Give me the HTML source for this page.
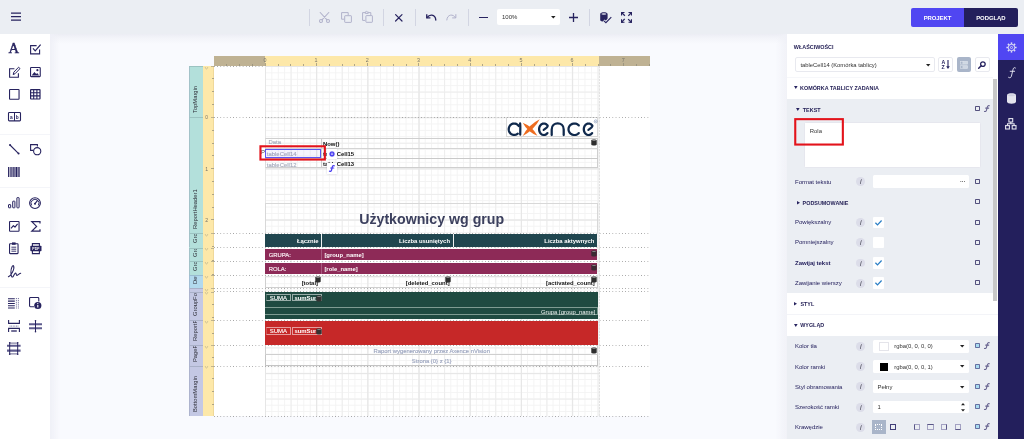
<!DOCTYPE html>
<html><head><meta charset="utf-8"><title>Report Designer</title><style>
*{box-sizing:border-box;margin:0;padding:0}
html,body{width:1024px;height:439px;overflow:hidden}
body{background:#f9fafe;font-family:"Liberation Sans",sans-serif;position:relative;color:#27235f}
.abs{position:absolute}
#topbar{left:0;top:0;width:1024px;height:34px;background:#ebeef3}
#topshadow{left:50px;top:34px;width:737px;height:10px;background:linear-gradient(#ecedf4,#f3f4f9 40%,#f9fafe)}
#leftshadow{left:50px;top:34px;width:10px;height:405px;background:linear-gradient(90deg,#eff0f7,rgba(249,250,254,0))}
#toolbox{left:0;top:34px;width:50px;height:405px;background:#fff}
#rpanel{left:787px;top:34px;width:211px;height:405px;background:#fff}
#rshadow{left:776px;top:34px;width:11px;height:405px;background:linear-gradient(90deg,rgba(249,250,254,0),#f0f1f7)}
#tabs{left:998px;top:34px;width:26px;height:405px;background:#231f5c}
.sep{position:absolute;top:9px;width:1px;height:17px;background:#d2d5e2}
.tsep{position:absolute;left:0;width:50px;height:1px;background:#f4f5f9}
svg{position:absolute;overflow:visible}
</style></head><body>
<div id="app" class="abs" style="left:0;top:0;width:1024px;height:439px;will-change:transform">
<div id="topbar" class="abs"></div>
<div id="topshadow" class="abs"></div><div id="leftshadow" class="abs"></div><div id="rshadow" class="abs"></div>
<div id="toolbox" class="abs"></div>
<div id="rpanel" class="abs"></div>
<div id="tabs" class="abs"></div>
<div class="abs" style="left:0;top:0;width:1024px;height:34px">
<svg style="left:11px;top:12px" width="10" height="9" viewBox="0 0 10 9"><path d="M0 1h10M0 4.5h10M0 8h10" stroke="#27235f" stroke-width="1.25"/></svg>
<div class="sep" style="left:309.4px"></div>
<div class="sep" style="left:383.4px"></div>
<div class="sep" style="left:414.7px"></div>
<div class="sep" style="left:467.6px"></div>
<div class="sep" style="left:589px"></div>
<svg style="left:319.4px;top:12px" width="11" height="11" viewBox="0 0 11 11" fill="none" stroke="#b1b2cb" stroke-width="1.05" stroke-linecap="round"><circle cx="2" cy="9" r="1.5"/><circle cx="9" cy="9" r="1.5"/><path d="M3 7.8 L9.8 0.5M8 7.8 L1.2 0.5"/></svg>
<svg style="left:341px;top:12px" width="11" height="11" viewBox="0 0 11 11" fill="none" stroke="#b1b2cb" stroke-width="1" stroke-linejoin="round"><path d="M3.2 7.2H0.6V0.6H7.2V3.2"/><rect x="3.7" y="3.7" width="6.7" height="6.7" rx="0.5"/></svg>
<svg style="left:362px;top:11.4px" width="11" height="12" viewBox="0 0 11 12" fill="none" stroke="#b1b2cb" stroke-width="1" stroke-linejoin="round"><path d="M3.2 9.4H0.6V1.6H3.3M6.2 1.6H8.8V4"/><path d="M3.3 2.4V0.9H4.1L4.7 0.3L5.4 0.9H6.2V2.4Z" /><rect x="3.9" y="4.6" width="6.5" height="6.7" rx="0.5"/></svg>
<svg style="left:395.4px;top:14px" width="7.6" height="7.6" viewBox="0 0 7.6 7.6" fill="none" stroke="#27235f" stroke-width="1.2" stroke-linecap="round"><path d="M0.6 0.6L7 7M7 0.6L0.6 7"/></svg>
<svg style="left:425.6px;top:14.2px" width="10.6" height="6.6" viewBox="0 0 10.6 6.6"><g  fill="none" stroke="#27235f" stroke-width="1.35" stroke-linejoin="miter"><path d="M0.75 0.2V3.9H4.4"/><path d="M1.2 3.5C2.4 1.7 4.2 0.9 5.9 1.1C8.2 1.4 9.6 3.4 9.8 6" stroke-linecap="round"/></g></svg>
<svg style="left:446.4px;top:14.2px" width="10.6" height="6.6" viewBox="0 0 10.6 6.6"><g transform="translate(10.6 0) scale(-1 1)" fill="none" stroke="#b1b2cb" stroke-width="1" stroke-linejoin="miter"><path d="M0.75 0.2V3.9H4.4"/><path d="M1.2 3.5C2.4 1.7 4.2 0.9 5.9 1.1C8.2 1.4 9.6 3.4 9.8 6" stroke-linecap="round"/></g></svg>
<div class="abs" style="left:479px;top:16.8px;width:9px;height:1.4px;background:#27235f"></div>
<div class="abs" style="left:497px;top:9px;width:63px;height:16.2px;background:#fff;border-radius:2px"></div>
<div class="abs" style="left:502px;top:13.6px;font-size:6px;line-height:7px;color:#333">100%</div>
<svg style="left:551.2px;top:15.8px" width="4.6" height="2.6" viewBox="0 0 4.6 2.6"><path d="M0 0H4.6L2.3 2.6Z" fill="#222"/></svg>
<svg style="left:569px;top:13.4px" width="9" height="9" viewBox="0 0 9 9"><path d="M0 4.5H9M4.5 0V9" stroke="#27235f" stroke-width="1.3"/></svg>
<svg style="left:599.6px;top:11.6px" width="12" height="11.4" viewBox="0 0 12 11.4"><path d="M0.2 2C0.2 -0.3 7.6 -0.3 7.6 2V8C7.6 10.3 0.2 10.3 0.2 8Z" fill="#27235f"/><ellipse cx="3.9" cy="1.9" rx="2.5" ry="0.75" fill="#e4e6f0"/><path d="M3.6 8.6L5.8 10.6L11.4 5" fill="none" stroke="#ebeef3" stroke-width="2.8"/><path d="M3.9 8.9L5.9 10.7L11.3 5.1" fill="none" stroke="#27235f" stroke-width="1.1"/></svg>
<svg style="left:621px;top:12px" width="11" height="10.8" viewBox="0 0 11 10.8" fill="none" stroke="#27235f"><g transform="translate(0 0) rotate(0)"><path d="M0.55 3.5V0.55H3.5" stroke-width="1.1"/><path d="M0.8 0.8L3.9 3.7" stroke-width="1.25"/><path d="M0 0H2.4L0 2.4Z" fill="#27235f" stroke="none"/></g><g transform="translate(11 0) rotate(90)"><path d="M0.55 3.5V0.55H3.5" stroke-width="1.1"/><path d="M0.8 0.8L3.9 3.7" stroke-width="1.25"/><path d="M0 0H2.4L0 2.4Z" fill="#27235f" stroke="none"/></g><g transform="translate(11 10.8) rotate(180)"><path d="M0.55 3.5V0.55H3.5" stroke-width="1.1"/><path d="M0.8 0.8L3.9 3.7" stroke-width="1.25"/><path d="M0 0H2.4L0 2.4Z" fill="#27235f" stroke="none"/></g><g transform="translate(0 10.8) rotate(270)"><path d="M0.55 3.5V0.55H3.5" stroke-width="1.1"/><path d="M0.8 0.8L3.9 3.7" stroke-width="1.25"/><path d="M0 0H2.4L0 2.4Z" fill="#27235f" stroke="none"/></g></svg>
<div class="abs" style="left:910.8px;top:8.2px;width:53.4px;height:18.6px;background:#5046f2;border-radius:2px 0 0 2px"></div>
<div class="abs" style="left:964.2px;top:8.2px;width:53.4px;height:18.6px;background:#231f5c;border-radius:0 2px 2px 0"></div>
<div class="abs" style="left:910.8px;top:13.6px;font-size:5.95px;font-weight:bold;color:#fff;line-height:8px;text-align:center;width:53.4px;letter-spacing:-0.05px">PROJEKT</div>
<div class="abs" style="left:964.2px;top:13.6px;font-size:5.95px;font-weight:bold;color:#fff;line-height:8px;text-align:center;width:53.4px;letter-spacing:-0.05px">PODGLĄD</div>
</div><div class="abs" style="left:0;top:0;width:50px;height:439px">
<div class="tsep" style="top:133.6px"></div>
<div class="tsep" style="top:187.4px"></div>
<div class="tsep" style="top:287.4px"></div>
<div class="abs" style="left:8.5px;top:41.4px;font-family:'Liberation Serif',serif;font-size:14.6px;line-height:14px;color:#27235f;-webkit-text-stroke:0.45px #27235f">A</div>
<svg style="left:30px;top:43.6px" width="11" height="10.6" viewBox="0 0 11 10.6" fill="none" stroke="#27235f" stroke-width="1" ><path d="M9.6 5.4V9.9H0.6V1.6H6.6" stroke-width="1.1"/><path d="M3 4.4L5.2 6.8L10.6 0.6" stroke-width="1.2"/></svg>
<svg style="left:8.8px;top:65.6px" width="11.4" height="12" viewBox="0 0 11.4 12" fill="none" stroke="#27235f" stroke-width="1" ><path d="M9.4 7.2V11.2H0.6V2.8H5.4" stroke-width="1.1"/><path d="M4.2 8.6L4.8 6.2L9.6 1.2L11 2.6L6.2 7.6Z" stroke-width="1" stroke-linejoin="round"/></svg>
<svg style="left:30px;top:66.8px" width="10.8" height="10.2" viewBox="0 0 10.8 10.2" fill="none" stroke="#27235f" stroke-width="1" ><rect x="0.55" y="0.55" width="9.7" height="9.1" rx="0.6" stroke-width="1.1"/><path d="M1.6 8.6L4.4 5L6.2 7L7.2 6L9.2 8.6Z" fill="#27235f" stroke="none"/><circle cx="7.4" cy="3.2" r="1.1" fill="#27235f" stroke="none"/></svg>
<svg style="left:8.7px;top:89px" width="10.6" height="10.8" viewBox="0 0 10.6 10.8" fill="none" stroke="#27235f" stroke-width="1" ><rect x="0.55" y="0.55" width="9.5" height="9.7" rx="0.5" stroke-width="1.1"/></svg>
<svg style="left:30px;top:89.2px" width="10.6" height="10.6" viewBox="0 0 10.6 10.6" fill="none" stroke="#27235f" stroke-width="1" ><rect x="0.6" y="0.6" width="9.4" height="9.4" rx="0.4" stroke-width="1.2"/><path d="M3.7 0.6V10M6.9 0.6V10M0.6 3.7H10M0.6 6.9H10" stroke-width="1.1"/></svg>
<svg style="left:7.6px;top:112.4px" width="13" height="9.4" viewBox="0 0 13 9.4" fill="none" stroke="#27235f" stroke-width="1" ><rect x="0.5" y="0.5" width="12" height="8.4" rx="0.8" stroke-width="1.1"/><path d="M6.5 0.5V8.9" stroke-width="1"/><text x="2" y="6.6" font-size="4.8" font-weight="bold" fill="#27235f" stroke="none" font-family="Liberation Sans">a</text><text x="7.8" y="6.6" font-size="4.8" font-weight="bold" fill="#27235f" stroke="none" font-family="Liberation Sans">b</text></svg>
<svg style="left:8.8px;top:143.8px" width="10.6" height="10.6" viewBox="0 0 10.6 10.6" fill="none" stroke="#27235f" stroke-width="1" ><path d="M1 1L9.6 9.6" stroke-width="1.1"/><circle cx="1" cy="1" r="1" fill="#27235f" stroke="none"/><circle cx="9.6" cy="9.6" r="1" fill="#27235f" stroke="none"/></svg>
<svg style="left:30px;top:143.8px" width="11.4" height="11.4" viewBox="0 0 11.4 11.4" fill="none" stroke="#27235f" stroke-width="1" ><path d="M3.4 6.4H0.6V0.6H7.4V2.6" stroke-width="1.1"/><circle cx="7.2" cy="7.2" r="3.6" stroke-width="1.1" fill="#fff"/></svg>
<svg style="left:8.2px;top:167px" width="12" height="10" viewBox="0 0 12 10" fill="none" stroke="#27235f" stroke-width="1" ><path d="M0.7 0V10M3 0V10M5.9 0V10M8.4 0V10M11 0V10" stroke-width="1.3"/><path d="M4.4 0V10M7.2 0V10M9.7 0V10" stroke-width="0.6"/></svg>
<svg style="left:8px;top:197.4px" width="11.6" height="11.4" viewBox="0 0 11.6 11.4" fill="none" stroke="#27235f" stroke-width="1" ><rect x="0.5" y="7.6" width="2.2" height="3.2" rx="0.4"/><rect x="4.7" y="4.2" width="2.2" height="6.6" rx="0.4"/><rect x="8.9" y="0.6" width="2.2" height="10.2" rx="0.4"/></svg>
<svg style="left:29.3px;top:197px" width="12" height="12.2" viewBox="0 0 12 12.2" fill="none" stroke="#27235f" stroke-width="1" ><circle cx="6" cy="6.1" r="5.4" stroke-width="1.1"/><path d="M2.6 8.4A4 4 0 1 1 9.4 8.4" stroke-width="1"/><path d="M6 6.6L8.4 3.6" stroke-width="1.1" stroke-linecap="round"/><circle cx="6" cy="6.8" r="1" fill="#27235f" stroke="none"/></svg>
<svg style="left:8.8px;top:221.2px" width="10.6" height="10.8" viewBox="0 0 10.6 10.8" fill="none" stroke="#27235f" stroke-width="1" ><rect x="0.55" y="0.55" width="9.5" height="9.7" rx="0.5" stroke-width="1.1"/><path d="M2 7.4L4.4 4.6L6 6.2L8.6 2.8" stroke-width="1.1" stroke-linejoin="round"/></svg>
<svg style="left:30.6px;top:221.2px" width="9.4" height="10.8" viewBox="0 0 9.4 10.8" fill="none" stroke="#27235f" stroke-width="1" ><path d="M9 2.6V0.6H0.8L5.6 5.4L0.8 10.2H9V8.2" stroke-width="1.2" stroke-linejoin="miter"/></svg>
<svg style="left:9.2px;top:242.4px" width="9.6" height="12.2" viewBox="0 0 9.6 12.2" fill="none" stroke="#27235f" stroke-width="1" ><rect x="0.55" y="1.8" width="8.5" height="9.8" rx="0.6" stroke-width="1.1"/><rect x="3" y="0.4" width="3.6" height="2.4" fill="#27235f" stroke="none"/><path d="M2.4 5.2H7.2M2.4 7.2H7.2M2.4 9.2H7.2" stroke-width="0.9"/></svg>
<svg style="left:29.5px;top:243px" width="11.8" height="11.2" viewBox="0 0 11.8 11.2" fill="none" stroke="#27235f" stroke-width="1" ><path d="M2.4 3V0.6H9.4V3" stroke-width="1.1"/><rect x="0.3" y="2.8" width="11.2" height="5.4" rx="0.8" fill="#27235f" stroke="none"/><path d="M2.4 8V10.6H9.4V8" stroke-width="1.1"/><text x="5.9" y="7" font-size="3.6" font-weight="bold" fill="#fff" stroke="none" text-anchor="middle" font-family="Liberation Sans">PDF</text></svg>
<svg style="left:7.5px;top:264.8px" width="13" height="13.2" viewBox="0 0 13 13.2" fill="none" stroke="#27235f" stroke-width="1" ><path d="M0.4 11.8C3 10.6 6.8 4.2 5.7 1.2C4.9 -0.8 2.7 3 2.9 7.6C3.1 11.8 4.1 12.8 5.1 11.6C6.1 10.4 6.7 7.8 7.7 8C8.5 8.2 7.9 10.4 8.9 10.4C9.9 10.4 10.7 8.6 12.7 8.2" stroke-width="1.05" stroke-linecap="round" stroke-linejoin="round"/></svg>
<svg style="left:8.4px;top:298px" width="11" height="11" viewBox="0 0 11 11" fill="none" stroke="#27235f" stroke-width="1" ><path d="M0 0.8H6.8M0 3.1H6.8M0 5.4H6.8M0 7.7H6.8M0 10H6.8" stroke-width="1.05"/><path d="M8.4 0V10.6M10.4 0V10.6" stroke-width="0.9" stroke="#5f5c8e" stroke-dasharray="1 0.9"/></svg>
<svg style="left:29.2px;top:297.2px" width="12.6" height="12.2" viewBox="0 0 12.6 12.2" fill="none" stroke="#27235f" stroke-width="1" ><path d="M5 9.7H1.4Q0.55 9.7 0.55 8.8V1.4Q0.55 0.55 1.4 0.55H8.9Q9.8 0.55 9.8 1.4V4.6" stroke-width="1.1"/><circle cx="8.8" cy="8.5" r="3.6" fill="#27235f" stroke="none"/><path d="M8.8 8V10.4" stroke="#fff" stroke-width="1.1"/><circle cx="8.8" cy="6.6" r="0.65" fill="#fff" stroke="none"/></svg>
<svg style="left:8px;top:320.2px" width="12" height="12" viewBox="0 0 12 12" fill="none" stroke="#27235f" stroke-width="1" ><path d="M0.6 0V3.4H11.4V0" stroke-width="1.1"/><path d="M1.6 6.1H10.4" stroke-width="0.9" stroke="#5f5c8e" stroke-dasharray="0.9 0.7"/><path d="M0.6 12V8.4H11.4V12" stroke-width="1.1"/><path d="M3.2 11H8.8" stroke-width="1.3"/></svg>
<svg style="left:28.8px;top:320px" width="13" height="12.6" viewBox="0 0 13 12.6" fill="none" stroke="#27235f" stroke-width="1" ><path d="M0 4.3H13M0 8.2H13" stroke-width="2" stroke="#5f5c8e"/><path d="M6.5 0.6V12" stroke-width="1"/><circle cx="6.5" cy="0.8" r="0.8" fill="#27235f" stroke="none"/><circle cx="6.5" cy="11.8" r="0.8" fill="#27235f" stroke="none"/></svg>
<svg style="left:7.2px;top:342px" width="13.6" height="13" viewBox="0 0 13.6 13" fill="none" stroke="#27235f" stroke-width="1" ><path d="M0 3.8H13.6M0 8.6H13.6" stroke-width="2.1" stroke="#5f5c8e"/><path d="M2.7 0.8V12.2M10.7 0.8V12.2" stroke-width="1"/><path d="M2.7 1.1H10.7M2.7 11.9H10.7" stroke-width="0.7"/><circle cx="2.7" cy="0.8" r="0.8" fill="#27235f" stroke="none"/><circle cx="10.7" cy="0.8" r="0.8" fill="#27235f" stroke="none"/><circle cx="2.7" cy="12.2" r="0.8" fill="#27235f" stroke="none"/><circle cx="10.7" cy="12.2" r="0.8" fill="#27235f" stroke="none"/></svg>
</div><style>
#surf{position:absolute;left:0;top:0;width:787px;height:439px;overflow:hidden;pointer-events:none}
#surf div{position:absolute}
.bl{left:189px;width:14.4px;border-left:1px solid rgba(140,150,175,.4);border-top:1px solid rgba(60,80,90,.2);overflow:hidden}
.bl span{position:absolute;left:7.2px;bottom:4.2px;transform-origin:0 100%;transform:rotate(-90deg) translate(0,1.7px);white-space:nowrap;font-size:5.8px;color:#2c2c36;line-height:7px;height:7px}
.vr{left:203.4px;width:10.6px;background:#fde8a9;border-right:1px solid #efd89a}
.dot{height:1px;background-image:linear-gradient(90deg,#a2a2a2 0,#a2a2a2 1.1px,transparent 1px);background-size:3.2px 1px}
.rt{font-size:5.9px;line-height:7px;white-space:nowrap}
.b{font-weight:bold}
.tick{background:#8f8a78}
.num{font-size:5.4px;color:#77746a;line-height:5px}
.db{width:6px;height:7px}
</style>
<div id="surf">
<div style="left:214px;top:66px;width:436px;height:350.3px;background:#fff"></div>
<div id="grid" style="left:265.2px;top:66px;width:333.40000000000003px;height:350.3px;background-image:linear-gradient(90deg,#e6e6e6 0,#e6e6e6 1px,transparent 1px),linear-gradient(#e6e6e6 0,#e6e6e6 1px,transparent 1px),linear-gradient(90deg,#ededed 0,#ededed 1px,transparent 1px),linear-gradient(#ededed 0,#ededed 1px,transparent 1px),linear-gradient(90deg,#f3f3f3 0,#f3f3f3 1px,transparent 1px),linear-gradient(#f3f3f3 0,#f3f3f3 1px,transparent 1px);background-size:51.2px 51.2px,51.2px 51.2px,25.6px 25.6px,25.6px 25.6px,6.4px 6.4px,6.4px 6.4px"></div>
<div style="left:598.6px;top:66px;width:1px;height:350.3px;background-image:linear-gradient(#e2e2e2 0,#e2e2e2 2px,transparent 2px);background-size:1px 3.2px"></div>
<div style="left:214px;top:56px;width:436px;height:10px;background:#fde8a9"></div>
<div style="left:214px;top:56px;width:51.19999999999999px;height:10px;background:#bfb293"></div>
<div style="left:598.6px;top:56px;width:51.39999999999998px;height:10px;background:#bfb293"></div>
<div class="tick" style="left:226.3px;top:64px;width:1px;height:2px;opacity:.7"></div>
<div class="tick" style="left:239.1px;top:64px;width:1px;height:2px;opacity:.7"></div>
<div class="tick" style="left:251.9px;top:64px;width:1px;height:2px;opacity:.7"></div>
<div class="tick" style="left:264.7px;top:63px;width:1px;height:3px;opacity:.7"></div>
<div class="num" style="left:259.9px;top:57.8px;width:10px;text-align:center">0</div>
<div class="tick" style="left:277.5px;top:64px;width:1px;height:2px;opacity:.7"></div>
<div class="tick" style="left:290.3px;top:64px;width:1px;height:2px;opacity:.7"></div>
<div class="tick" style="left:303.1px;top:64px;width:1px;height:2px;opacity:.7"></div>
<div class="tick" style="left:315.9px;top:63px;width:1px;height:3px;opacity:.7"></div>
<div class="num" style="left:311.1px;top:57.8px;width:10px;text-align:center">1</div>
<div class="tick" style="left:328.7px;top:64px;width:1px;height:2px;opacity:.7"></div>
<div class="tick" style="left:341.5px;top:64px;width:1px;height:2px;opacity:.7"></div>
<div class="tick" style="left:354.3px;top:64px;width:1px;height:2px;opacity:.7"></div>
<div class="tick" style="left:367.1px;top:63px;width:1px;height:3px;opacity:.7"></div>
<div class="num" style="left:362.3px;top:57.8px;width:10px;text-align:center">2</div>
<div class="tick" style="left:379.9px;top:64px;width:1px;height:2px;opacity:.7"></div>
<div class="tick" style="left:392.7px;top:64px;width:1px;height:2px;opacity:.7"></div>
<div class="tick" style="left:405.5px;top:64px;width:1px;height:2px;opacity:.7"></div>
<div class="tick" style="left:418.3px;top:63px;width:1px;height:3px;opacity:.7"></div>
<div class="num" style="left:413.5px;top:57.8px;width:10px;text-align:center">3</div>
<div class="tick" style="left:431.1px;top:64px;width:1px;height:2px;opacity:.7"></div>
<div class="tick" style="left:443.9px;top:64px;width:1px;height:2px;opacity:.7"></div>
<div class="tick" style="left:456.7px;top:64px;width:1px;height:2px;opacity:.7"></div>
<div class="tick" style="left:469.5px;top:63px;width:1px;height:3px;opacity:.7"></div>
<div class="num" style="left:464.7px;top:57.8px;width:10px;text-align:center">4</div>
<div class="tick" style="left:482.3px;top:64px;width:1px;height:2px;opacity:.7"></div>
<div class="tick" style="left:495.1px;top:64px;width:1px;height:2px;opacity:.7"></div>
<div class="tick" style="left:507.9px;top:64px;width:1px;height:2px;opacity:.7"></div>
<div class="tick" style="left:520.7px;top:63px;width:1px;height:3px;opacity:.7"></div>
<div class="num" style="left:515.9px;top:57.8px;width:10px;text-align:center">5</div>
<div class="tick" style="left:533.5px;top:64px;width:1px;height:2px;opacity:.7"></div>
<div class="tick" style="left:546.3px;top:64px;width:1px;height:2px;opacity:.7"></div>
<div class="tick" style="left:559.1px;top:64px;width:1px;height:2px;opacity:.7"></div>
<div class="tick" style="left:571.9px;top:63px;width:1px;height:3px;opacity:.7"></div>
<div class="num" style="left:567.1px;top:57.8px;width:10px;text-align:center">6</div>
<div class="tick" style="left:584.7px;top:64px;width:1px;height:2px;opacity:.7"></div>
<div class="tick" style="left:597.5px;top:64px;width:1px;height:2px;opacity:.7"></div>
<div class="tick" style="left:610.3px;top:64px;width:1px;height:2px;opacity:.7"></div>
<div class="tick" style="left:623.1px;top:63px;width:1px;height:3px;opacity:.7"></div>
<div class="num" style="left:618.3px;top:57.8px;width:10px;text-align:center">7</div>
<div class="tick" style="left:635.9px;top:64px;width:1px;height:2px;opacity:.7"></div>
<div class="tick" style="left:648.7px;top:64px;width:1px;height:2px;opacity:.7"></div>
<div style="left:189px;top:66px;width:14.4px;height:210px;background:#b3e0db"></div><div style="left:189px;top:276px;width:14.4px;height:140.3px;background:#c4c8e4"></div><div style="left:203.4px;top:66px;width:10.6px;height:350.3px;background:#fde8a9"></div>
<div class="bl" style="top:66px;height:51.400000000000006px;background:#b3e0db"><span>TopMargin</span></div>
<div class="vr" style="top:66px;height:51.400000000000006px"></div>
<div class="tick" style="left:212px;top:78.3px;width:2px;height:1px;opacity:.7"></div>
<div class="tick" style="left:212px;top:91.1px;width:2px;height:1px;opacity:.7"></div>
<div class="tick" style="left:212px;top:103.9px;width:2px;height:1px;opacity:.7"></div>
<svg style="left:205px;top:66.6px" width="3" height="2.2" viewBox="0 0 3 2.2"><path d="M0.3 0C0.3 2.6 2.7 2.6 2.7 0" fill="none" stroke="#b3ab8a" stroke-width="0.6"/></svg>
<div class="tick" style="left:210.8px;top:66.0px;width:3.2px;height:1px;opacity:.55"></div>
<div class="bl" style="top:117.4px;height:115.9px;background:#b3e0db"><span>ReportHeader1</span></div>
<div class="vr" style="top:117.4px;height:115.9px"></div>
<div class="tick" style="left:212px;top:129.7px;width:2px;height:1px;opacity:.7"></div>
<div class="tick" style="left:212px;top:142.5px;width:2px;height:1px;opacity:.7"></div>
<div class="tick" style="left:212px;top:155.3px;width:2px;height:1px;opacity:.7"></div>
<div class="tick" style="left:211px;top:168.1px;width:3px;height:1px;opacity:.7"></div>
<div class="num" style="left:205.2px;top:166.8px;font-size:5.2px;width:3px;text-align:center">1</div>
<div class="tick" style="left:212px;top:180.9px;width:2px;height:1px;opacity:.7"></div>
<div class="tick" style="left:212px;top:193.7px;width:2px;height:1px;opacity:.7"></div>
<div class="tick" style="left:212px;top:206.5px;width:2px;height:1px;opacity:.7"></div>
<div class="tick" style="left:211px;top:219.3px;width:3px;height:1px;opacity:.7"></div>
<div class="num" style="left:205.2px;top:218.0px;font-size:5.2px;width:3px;text-align:center">2</div>
<div class="num" style="left:205.2px;top:114.8px;font-size:4.8px">0</div>
<div class="tick" style="left:210.8px;top:117.4px;width:3.2px;height:1px;opacity:.55"></div>
<div class="dot" style="left:214px;top:117px;width:436px"></div>
<div class="bl" style="top:233.3px;height:14.199999999999989px;background:#b3e0db"><span>GroupHeader3</span></div>
<div class="vr" style="top:233.3px;height:14.199999999999989px"></div>
<div class="tick" style="left:212px;top:245.6px;width:2px;height:1px;opacity:.7"></div>
<svg style="left:205px;top:233.9px" width="3" height="2.2" viewBox="0 0 3 2.2"><path d="M0.3 0C0.3 2.6 2.7 2.6 2.7 0" fill="none" stroke="#b3ab8a" stroke-width="0.6"/></svg>
<div class="tick" style="left:210.8px;top:233.3px;width:3.2px;height:1px;opacity:.55"></div>
<div class="dot" style="left:214px;top:233px;width:436px"></div>
<div class="bl" style="top:247.5px;height:13.899999999999977px;background:#b3e0db"><span>GroupHeader2</span></div>
<div class="vr" style="top:247.5px;height:13.899999999999977px"></div>
<div class="tick" style="left:212px;top:259.8px;width:2px;height:1px;opacity:.7"></div>
<svg style="left:205px;top:248.1px" width="3" height="2.2" viewBox="0 0 3 2.2"><path d="M0.3 0C0.3 2.6 2.7 2.6 2.7 0" fill="none" stroke="#b3ab8a" stroke-width="0.6"/></svg>
<div class="tick" style="left:210.8px;top:247.5px;width:3.2px;height:1px;opacity:.55"></div>
<div class="dot" style="left:214px;top:247px;width:436px"></div>
<div class="bl" style="top:261.4px;height:14.0px;background:#b3e0db"><span>GroupHeader1</span></div>
<div class="vr" style="top:261.4px;height:14.0px"></div>
<div class="tick" style="left:212px;top:273.7px;width:2px;height:1px;opacity:.7"></div>
<svg style="left:205px;top:262.0px" width="3" height="2.2" viewBox="0 0 3 2.2"><path d="M0.3 0C0.3 2.6 2.7 2.6 2.7 0" fill="none" stroke="#b3ab8a" stroke-width="0.6"/></svg>
<div class="tick" style="left:210.8px;top:261.4px;width:3.2px;height:1px;opacity:.55"></div>
<div class="dot" style="left:214px;top:261px;width:436px"></div>
<div class="bl" style="top:275.4px;height:13.0px;background:#b2d9ee"><span>Detail</span></div>
<div class="vr" style="top:275.4px;height:13.0px"></div>
<svg style="left:205px;top:276.0px" width="3" height="2.2" viewBox="0 0 3 2.2"><path d="M0.3 0C0.3 2.6 2.7 2.6 2.7 0" fill="none" stroke="#b3ab8a" stroke-width="0.6"/></svg>
<div class="tick" style="left:210.8px;top:275.4px;width:3.2px;height:1px;opacity:.55"></div>
<div class="dot" style="left:214px;top:275px;width:436px"></div>
<div class="bl" style="top:288.4px;height:3.2000000000000455px;background:#c4c8e4"><span></span></div>
<div class="vr" style="top:288.4px;height:3.2000000000000455px"></div>
<svg style="left:205px;top:289.0px" width="3" height="2.2" viewBox="0 0 3 2.2"><path d="M0.3 0C0.3 2.6 2.7 2.6 2.7 0" fill="none" stroke="#b3ab8a" stroke-width="0.6"/></svg>
<div class="tick" style="left:210.8px;top:288.4px;width:3.2px;height:1px;opacity:.55"></div>
<div class="dot" style="left:214px;top:288px;width:436px"></div>
<div class="bl" style="top:291.6px;height:28.69999999999999px;background:#c4c8e4"><span>GroupFooter1</span></div>
<div class="vr" style="top:291.6px;height:28.69999999999999px"></div>
<div class="tick" style="left:212px;top:303.9px;width:2px;height:1px;opacity:.7"></div>
<div class="tick" style="left:212px;top:316.7px;width:2px;height:1px;opacity:.7"></div>
<svg style="left:205px;top:292.2px" width="3" height="2.2" viewBox="0 0 3 2.2"><path d="M0.3 0C0.3 2.6 2.7 2.6 2.7 0" fill="none" stroke="#b3ab8a" stroke-width="0.6"/></svg>
<div class="tick" style="left:210.8px;top:291.6px;width:3.2px;height:1px;opacity:.55"></div>
<div class="dot" style="left:214px;top:291px;width:436px"></div>
<div class="bl" style="top:320.3px;height:24.69999999999999px;background:#c4c8e4"><span>ReportFooter</span></div>
<div class="vr" style="top:320.3px;height:24.69999999999999px"></div>
<div class="tick" style="left:212px;top:332.6px;width:2px;height:1px;opacity:.7"></div>
<svg style="left:205px;top:320.9px" width="3" height="2.2" viewBox="0 0 3 2.2"><path d="M0.3 0C0.3 2.6 2.7 2.6 2.7 0" fill="none" stroke="#b3ab8a" stroke-width="0.6"/></svg>
<div class="tick" style="left:210.8px;top:320.3px;width:3.2px;height:1px;opacity:.55"></div>
<div class="dot" style="left:214px;top:320px;width:436px"></div>
<div class="bl" style="top:345px;height:20.80000000000001px;background:#c4c8e4"><span>PageFooter</span></div>
<div class="vr" style="top:345px;height:20.80000000000001px"></div>
<div class="tick" style="left:212px;top:357.3px;width:2px;height:1px;opacity:.7"></div>
<svg style="left:205px;top:345.6px" width="3" height="2.2" viewBox="0 0 3 2.2"><path d="M0.3 0C0.3 2.6 2.7 2.6 2.7 0" fill="none" stroke="#b3ab8a" stroke-width="0.6"/></svg>
<div class="tick" style="left:210.8px;top:345.0px;width:3.2px;height:1px;opacity:.55"></div>
<div class="dot" style="left:214px;top:345px;width:436px"></div>
<div class="bl" style="top:365.8px;height:50.5px;background:#c4c8e4"><span>BottomMargin</span></div>
<div class="vr" style="top:365.8px;height:50.5px"></div>
<div class="tick" style="left:212px;top:378.1px;width:2px;height:1px;opacity:.7"></div>
<div class="tick" style="left:212px;top:390.9px;width:2px;height:1px;opacity:.7"></div>
<div class="tick" style="left:212px;top:403.7px;width:2px;height:1px;opacity:.7"></div>
<svg style="left:205px;top:366.4px" width="3" height="2.2" viewBox="0 0 3 2.2"><path d="M0.3 0C0.3 2.6 2.7 2.6 2.7 0" fill="none" stroke="#b3ab8a" stroke-width="0.6"/></svg>
<div class="tick" style="left:210.8px;top:365.8px;width:3.2px;height:1px;opacity:.55"></div>
<div class="dot" style="left:214px;top:366px;width:436px"></div>
<div class="dot" style="left:214px;top:416px;width:436px"></div>
<div class="dot" style="left:214px;top:66px;width:51.19999999999999px"></div>
<div style="left:265.2px;top:137.6px;width:333.00000000000006px;height:30.900000000000006px;border:1px solid #cfcfcf;border-left-color:#dcdcdc"></div>
<div style="left:265.2px;top:147.9px;width:333.00000000000006px;height:1.3px;background:#d4d4d4"></div>
<div style="left:265.2px;top:158.29999999999998px;width:333.00000000000006px;height:1.2px;background:#c9c9c9"></div>
<div style="left:321.3px;top:137.6px;width:1px;height:30.900000000000006px;background:#cfcfcf"></div>
<div style="left:268.5px;top:138.1px;font-size:5.95px;color:#a3a9bb;line-height:8px;white-space:nowrap;-webkit-text-stroke:0.12px #a3a9bb">Data</div>
<div style="left:266.8px;top:150.2px;font-size:5.95px;color:#a3a9bb;line-height:8px;white-space:nowrap;-webkit-text-stroke:0.12px #a3a9bb">tableCell14</div>
<div style="left:266.8px;top:161.1px;font-size:5.95px;color:#a3a9bb;line-height:8px;white-space:nowrap;-webkit-text-stroke:0.12px #a3a9bb">tableCell12</div>
<div style="left:323px;top:140.8px;font-weight:bold;font-size:5.9px;color:#111;line-height:7px;white-space:nowrap">Now()</div>
<div style="left:323px;top:151.2px;font-weight:bold;font-size:5.9px;color:#111;line-height:7px;white-space:nowrap">tableCell15</div>
<div style="left:323px;top:161.2px;font-weight:bold;font-size:5.9px;color:#111;line-height:7px;white-space:nowrap">tableCell13</div>
<div style="left:265.2px;top:148.6px;width:56px;height:9.8px;border:1px solid #5b55f2;background:rgba(91,85,242,.06)"></div>
<div style="left:261px;top:149.2px;font-size:6px;line-height:7px;color:#444;width:4px;overflow:hidden">P</div>
<svg style="left:0;top:0" width="787" height="439"><rect x="260.45" y="146.3" width="64.4" height="13.25" fill="none" stroke="#e3131b" stroke-width="2.1"/></svg>
<div style="left:326.6px;top:148.8px;width:10.6px;height:10.6px;background:#fff;box-shadow:0 0 2px rgba(60,60,90,.25)"></div>
<div style="left:326.6px;top:163px;width:10.6px;height:11px;background:#fff;box-shadow:0 0 2px rgba(60,60,90,.25)"></div>
<svg style="left:328.6px;top:151.2px" width="6" height="6" viewBox="0 0 12 12"><g fill="#4a3ff0"><rect x="4.9" y="0" width="2.2" height="3" transform="rotate(0 6 6)"/><rect x="4.9" y="0" width="2.2" height="3" transform="rotate(45 6 6)"/><rect x="4.9" y="0" width="2.2" height="3" transform="rotate(90 6 6)"/><rect x="4.9" y="0" width="2.2" height="3" transform="rotate(135 6 6)"/><rect x="4.9" y="0" width="2.2" height="3" transform="rotate(180 6 6)"/><rect x="4.9" y="0" width="2.2" height="3" transform="rotate(225 6 6)"/><rect x="4.9" y="0" width="2.2" height="3" transform="rotate(270 6 6)"/><rect x="4.9" y="0" width="2.2" height="3" transform="rotate(315 6 6)"/></g><circle cx="6" cy="6" r="2.9" fill="none" stroke="#4a3ff0" stroke-width="2.4"/></svg>
<svg style="left:328.8px;top:165.4px" width="5.8" height="7" viewBox="0 0 5.8 7.2" fill="none" stroke="#4a3ff0" stroke-width="1.4" stroke-linecap="round"><path d="M5.3 0.8C4.2 0.3 3.6 1 3.3 2.2L2.5 5.2C2.2 6.4 1.5 6.8 0.5 6.4"/><path d="M1.6 3.1H4.8" stroke-width="1.2"/></svg>
<div style="left:506.3px;top:117.4px;width:91.6px;height:20px;background:#fff;border:1px solid #d9d9d9"></div>
<svg style="left:0;top:0" width="787" height="439" viewBox="0 0 787 439"><g fill="none" stroke-linecap="round" stroke-linejoin="round" stroke-width="2.25"><path stroke="#10294c" d="M517.74 133.65 L516.83 134.30 L515.82 134.75 L514.74 134.97 L513.64 134.97 L512.57 134.74 L511.55 134.29 L510.65 133.64 L509.89 132.82 L509.29 131.85 L508.90 130.78 L508.71 129.65 L508.75 128.50 L509.00 127.38 L509.46 126.34 L510.10 125.41 L510.92 124.64 L511.86 124.05 L512.89 123.66 L513.98 123.50 L515.08 123.57 L516.14 123.87 L517.12 124.38 L517.99 125.08 L518.71 125.95"/><path stroke="#10294c" d="M520.1 123.4 C520.5 126 520.3 131 520.2 134.6"/><path fill="#ee6d20" stroke="none" d="M522.7 135.9 Q534.0 130.2 539.7 119.3 Q528.6 124.8 522.7 135.9 Z"/><path fill="#ee6d20" stroke="none" d="M522.7 122.8 Q527.6 132.0 537.4 135.8 Q532.6 126.6 522.7 122.8 Z"/><path stroke="#10294c" d="M547.47 133.10 L546.90 133.74 L546.25 134.26 L545.54 134.65 L544.79 134.90 L544.01 135.00 L543.23 134.94 L542.47 134.74 L541.75 134.39 L541.08 133.90 L540.49 133.29 L539.98 132.58 L539.59 131.77 L539.30 130.90 L539.14 129.98 L539.10 129.05 L539.19 128.12 L539.41 127.22 L539.74 126.38 L540.19 125.61 L540.73 124.93 L541.36 124.37 L542.05 123.94 L542.79 123.65 L543.57 123.51 L544.35 123.52 L545.12 123.69 L545.85 124.00 L546.54 124.45 L547.15 125.02 L547.68 125.71 Q547.88 127.31 543.70 129.85"/><path stroke="#10294c" d="M551.7 135 V129.4 C551.7 121.4 563.7 121.4 563.7 129.4 V135"/><path stroke="#10294c" d="M578.78 133.10 L577.91 133.87 L576.89 134.46 L575.78 134.84 L574.61 135.00 L573.43 134.92 L572.29 134.62 L571.23 134.10 L570.30 133.39 L569.54 132.51 L568.97 131.50 L568.62 130.40 L568.50 129.25 L568.62 128.10 L568.97 127.00 L569.54 125.99 L570.30 125.11 L571.23 124.40 L572.29 123.88 L573.43 123.58 L574.61 123.50 L575.78 123.66 L576.89 124.04 L577.91 124.63 L578.78 125.40"/><path stroke="#10294c" d="M592.17 133.10 L591.60 133.74 L590.95 134.26 L590.24 134.65 L589.49 134.90 L588.71 135.00 L587.93 134.94 L587.17 134.74 L586.45 134.39 L585.78 133.90 L585.19 133.29 L584.68 132.58 L584.29 131.77 L584.00 130.90 L583.84 129.98 L583.80 129.05 L583.89 128.12 L584.11 127.22 L584.44 126.38 L584.89 125.61 L585.43 124.93 L586.06 124.37 L586.75 123.94 L587.49 123.65 L588.27 123.51 L589.05 123.52 L589.82 123.69 L590.55 124.00 L591.24 124.45 L591.85 125.02 L592.38 125.71 Q592.58 127.31 588.40 129.85"/></g><circle cx="595.7" cy="121.4" r="1.5" fill="none" stroke="#7d92b4" stroke-width="0.6"/><text x="595.7" y="122.2" font-size="2.4" font-weight="bold" fill="#7d92b4" text-anchor="middle" font-family="Liberation Sans">R</text></svg>
<div class="dot" style="left:506.8px;top:117px;width:91.4px"></div>
<svg style="left:591.3px;top:138.6px" width="6" height="7" viewBox="0 0 6 7"><path d="M0.3 1.5 C0.3 0.2 5.7 0.2 5.7 1.5 V5.6 C5.7 6.9 0.3 6.9 0.3 5.6 Z" fill="#2d2d2d"/><ellipse cx="3" cy="1.5" rx="2" ry="0.6" fill="#8a8a8a"/></svg>
<div style="left:265.2px;top:203.4px;width:333.00000000000006px;height:29.4px;border:1px solid #d8d8d8;border-bottom:none"></div>
<div style="left:265.2px;top:211.3px;width:333.00000000000006px;text-align:center;font-weight:bold;font-size:14.2px;line-height:17px;color:#3c405e;white-space:nowrap">Użytkownicy wg grup</div>
<div style="left:265.2px;top:234.1px;width:332.2px;height:12.6px;background:#20464f"></div>
<div style="left:321.3px;top:234.1px;width:1.2px;height:12.6px;background:#eef2f2"></div>
<div style="left:453.2px;top:234.1px;width:1.2px;height:12.6px;background:#eef2f2"></div>
<div style="left:265.2px;top:238.4px;width:53.4px;font-weight:bold;font-size:5.9px;color:#fff;line-height:7px;white-space:nowrap;text-align:right">Łącznie</div>
<div style="left:322px;top:238.4px;width:128px;font-weight:bold;font-size:5.9px;color:#fff;line-height:7px;white-space:nowrap;text-align:right">Liczba usuniętych</div>
<div style="left:454px;top:238.4px;width:140.4px;font-weight:bold;font-size:5.9px;color:#fff;line-height:7px;white-space:nowrap;text-align:right">Liczba aktywnych</div>
<div style="left:265.2px;top:249.4px;width:332.2px;height:10.8px;background:#8d2a57"></div>
<div style="left:321.3px;top:249.4px;width:1px;height:10.8px;background:#a85a80"></div>
<div style="left:268.7px;top:252.3px;font-size:5.9px;line-height:7px;color:#f7e8ef;white-space:nowrap;-webkit-text-stroke:0.18px #f7e8ef">GRUPA:</div>
<div style="left:324.4px;top:252.20000000000002px;font-size:5.9px;line-height:7px;color:#fff;font-weight:bold;white-space:nowrap">[group_name]</div>
<svg style="left:591.3px;top:250.0px" width="6" height="7" viewBox="0 0 6 7"><path d="M0.3 1.5 C0.3 0.2 5.7 0.2 5.7 1.5 V5.6 C5.7 6.9 0.3 6.9 0.3 5.6 Z" fill="#3a2a32"/><ellipse cx="3" cy="1.5" rx="2" ry="0.6" fill="#8a8a8a"/></svg>
<div style="left:265.2px;top:263.3px;width:332.2px;height:10.8px;background:#8d2a57"></div>
<div style="left:321.3px;top:263.3px;width:1px;height:10.8px;background:#a85a80"></div>
<div style="left:268.7px;top:266.2px;font-size:5.9px;line-height:7px;color:#f7e8ef;white-space:nowrap;-webkit-text-stroke:0.18px #f7e8ef">ROLA:</div>
<div style="left:324.4px;top:266.1px;font-size:5.9px;line-height:7px;color:#fff;font-weight:bold;white-space:nowrap">[role_name]</div>
<svg style="left:591.3px;top:263.90000000000003px" width="6" height="7" viewBox="0 0 6 7"><path d="M0.3 1.5 C0.3 0.2 5.7 0.2 5.7 1.5 V5.6 C5.7 6.9 0.3 6.9 0.3 5.6 Z" fill="#3a2a32"/><ellipse cx="3" cy="1.5" rx="2" ry="0.6" fill="#8a8a8a"/></svg>
<div style="left:265.2px;top:276.4px;width:333.00000000000006px;height:11.6px;border:1px solid #cfcfcf;border-top-color:#e0e0e0"></div>
<div style="left:265.2px;top:279.6px;width:52.8px;font-weight:bold;font-size:5.9px;color:#161616;line-height:7px;white-space:nowrap;text-align:right">[total]</div>
<div style="left:322px;top:279.6px;width:127.6px;font-weight:bold;font-size:5.9px;color:#161616;line-height:7px;white-space:nowrap;text-align:right">[deleted_count]</div>
<div style="left:454px;top:279.6px;width:140.8px;font-weight:bold;font-size:5.9px;color:#161616;line-height:7px;white-space:nowrap;text-align:right">[activated_count]</div>
<svg style="left:315px;top:276.2px" width="6" height="7" viewBox="0 0 6 7"><path d="M0.3 1.5 C0.3 0.2 5.7 0.2 5.7 1.5 V5.6 C5.7 6.9 0.3 6.9 0.3 5.6 Z" fill="#2d2d2d"/><ellipse cx="3" cy="1.5" rx="2" ry="0.6" fill="#8a8a8a"/></svg>
<svg style="left:445.2px;top:276.2px" width="6" height="7" viewBox="0 0 6 7"><path d="M0.3 1.5 C0.3 0.2 5.7 0.2 5.7 1.5 V5.6 C5.7 6.9 0.3 6.9 0.3 5.6 Z" fill="#2d2d2d"/><ellipse cx="3" cy="1.5" rx="2" ry="0.6" fill="#8a8a8a"/></svg>
<svg style="left:591.3px;top:276.2px" width="6" height="7" viewBox="0 0 6 7"><path d="M0.3 1.5 C0.3 0.2 5.7 0.2 5.7 1.5 V5.6 C5.7 6.9 0.3 6.9 0.3 5.6 Z" fill="#2d2d2d"/><ellipse cx="3" cy="1.5" rx="2" ry="0.6" fill="#8a8a8a"/></svg>
<div style="left:265.2px;top:292.2px;width:333.00000000000006px;height:26.6px;background:#1f4a41"></div>
<div style="left:265.2px;top:306.8px;width:333.00000000000006px;height:7.8px;border:1px solid #7f9b92;border-left:none"></div>
<div style="left:265.2px;top:309px;width:330.20000000000005px;text-align:right;font-size:5.9px;line-height:7px;color:#eef3f1;white-space:nowrap;text-decoration:underline;text-decoration-color:rgba(255,255,255,.0)">Grupa [group_name]</div>
<div style="left:265.6px;top:293.9px;width:25.2px;height:7.6px;border:1px solid rgba(255,255,255,.55);border-left-color:rgba(255,255,255,.2)"></div>
<div style="left:269.7px;top:295.09999999999997px;font-size:6px;line-height:7px;color:#fff;white-space:nowrap;-webkit-text-stroke:0.12px #fff">SUMA</div>
<div style="left:292.2px;top:293.9px;width:30px;height:7.6px;border:1px solid rgba(255,255,255,.55)"></div>
<div style="left:294.4px;top:295.0px;width:22px;overflow:hidden;font-size:5.9px;line-height:7px;color:#fff;font-weight:bold;white-space:nowrap">sumSum</div>
<svg style="left:315.8px;top:294.9px" width="6" height="7" viewBox="0 0 6 7"><path d="M0.3 1.5 C0.3 0.2 5.7 0.2 5.7 1.5 V5.6 C5.7 6.9 0.3 6.9 0.3 5.6 Z" fill="#333"/><ellipse cx="3" cy="1.5" rx="2" ry="0.6" fill="#8a8a8a"/></svg>
<div style="left:265.2px;top:320.8px;width:333.00000000000006px;height:23.8px;background:#c62828"></div>
<div style="left:265.6px;top:327.1px;width:25.2px;height:7.6px;border:1px solid rgba(255,255,255,.55);border-left-color:rgba(255,255,255,.2)"></div>
<div style="left:269.7px;top:328.3px;font-size:6px;line-height:7px;color:#fff;white-space:nowrap;-webkit-text-stroke:0.12px #fff">SUMA</div>
<div style="left:292.2px;top:327.1px;width:30px;height:7.6px;border:1px solid rgba(255,255,255,.55)"></div>
<div style="left:294.4px;top:328.20000000000005px;width:22px;overflow:hidden;font-size:5.9px;line-height:7px;color:#fff;font-weight:bold;white-space:nowrap">sumSum</div>
<svg style="left:315.8px;top:328.1px" width="6" height="7" viewBox="0 0 6 7"><path d="M0.3 1.5 C0.3 0.2 5.7 0.2 5.7 1.5 V5.6 C5.7 6.9 0.3 6.9 0.3 5.6 Z" fill="#333"/><ellipse cx="3" cy="1.5" rx="2" ry="0.6" fill="#8a8a8a"/></svg>
<div style="left:265.2px;top:345.4px;width:333.00000000000006px;height:10px;border:1px solid #cfcfcf;border-top:none"></div>
<div style="left:265.2px;top:355.4px;width:333.00000000000006px;height:10.2px;border:1px solid #c4c4c4;border-top:none"></div>
<div style="left:265.2px;top:347.8px;width:333.00000000000006px;font-size:5.9px;line-height:7px;color:#9ca5bf;white-space:nowrap;text-align:center;-webkit-text-stroke:0.15px #9ca5bf">Raport wygenerowany przez Axence nVision</div>
<div style="left:265.2px;top:358.2px;width:333.00000000000006px;font-size:5.9px;line-height:7px;color:#9ca5bf;white-space:nowrap;text-align:center;-webkit-text-stroke:0.15px #9ca5bf">Strona {0} z {1}</div>
<svg style="left:591.3px;top:346.6px" width="6" height="7" viewBox="0 0 6 7"><path d="M0.3 1.5 C0.3 0.2 5.7 0.2 5.7 1.5 V5.6 C5.7 6.9 0.3 6.9 0.3 5.6 Z" fill="#2d2d2d"/><ellipse cx="3" cy="1.5" rx="2" ry="0.6" fill="#8a8a8a"/></svg>
</div><style>
#pn div{position:absolute}
#pn .lbl{left:795px;font-size:6.05px;line-height:8px;color:#27235f;white-space:nowrap;letter-spacing:-0.04px}
#pn .hd{font-size:5.4px;line-height:8px;font-weight:bold;color:#1f1b52;white-space:nowrap;letter-spacing:0.02px}
#pn .inp{left:872.5px;width:96.5px;height:12.8px;margin-top:0.2px;background:#fff;border-radius:1.5px}
#pn .val{font-size:5.9px;line-height:8px;color:#333;white-space:nowrap}
#pn .info{left:856.4px;width:8.8px;height:8.8px;border-radius:50%;background:#dcdde9;font-family:'Liberation Sans',sans-serif;font-style:italic;font-size:7px;line-height:9.8px;text-align:center;color:#3a3a4a;text-indent:0.2px;margin-top:0.4px}
#pn .cb{left:872.5px;width:11px;height:11.4px;background:#fff;border-radius:1px}
#pn .sq{left:974.8px;width:5.2px;height:5px;border:1px solid rgba(50,46,100,.82);border-radius:0.8px}
#pn .sqb{left:974.8px;width:5.2px;height:5.1px;border:1px solid rgba(74,71,131,.72);border-radius:0.8px;background:#a9dcf0}
#pn .fx{left:984px;font-family:'Liberation Serif',serif;font-style:italic;font-weight:bold;font-size:8.2px;line-height:9px;color:#3a375f}
</style>
<div id="pn" class="abs" style="left:0;top:0;width:1024px;height:439px">
<div style="left:787px;top:99px;width:206px;height:193.6px;background:#ebeef3"></div>
<div style="left:787px;top:335.8px;width:211px;height:104px;background:#ebeef3"></div>
<div style="left:787px;top:314px;width:211px;height:1px;background:#f3f4f8"></div><div style="left:787px;top:77px;width:206px;height:1px;background:#f6f7fa"></div>
<div style="left:993px;top:79px;width:4px;height:222px;background:#c8c8c8"></div>
<div class="hd" style="left:793.8px;top:42.8px">WŁAŚCIWOŚCI</div>
<div style="left:795px;top:57.4px;width:139.8px;height:14.4px;background:#fff;border:1px solid #e8e9ef;border-radius:2px"></div>
<div class="val" style="left:800.4px;top:60.6px;font-size:5.85px">tableCell14 (Komórka tablicy)</div>
<svg style="left:925.6px;top:63.6px" width="4.4" height="2.6" viewBox="0 0 4.4 2.6"><path d="M0 0H4.4L2.2 2.6Z" fill="#222"/></svg>
<div style="left:938px;top:57.4px;width:15px;height:14.4px;background:#fff;border:1px solid #e8e9ef;border-radius:2px"></div>
<div style="left:956.8px;top:57.4px;width:14.4px;height:14.4px;background:#a9b5c9;border-radius:2px"></div>
<div style="left:975px;top:57.4px;width:14.6px;height:14.4px;background:#fff;border:1px solid #e8e9ef;border-radius:2px"></div>
<div style="left:941.6px;top:60px;font-size:5.2px;line-height:5px;font-weight:bold;color:#27235f">A<br>Z</div>
<svg style="left:946.4px;top:60.2px" width="4" height="9" viewBox="0 0 4 9"><path d="M2 0V7" stroke="#27235f" stroke-width="1.1" fill="none"/><path d="M0.2 6.2H3.8L2 9Z" fill="#27235f"/></svg>
<svg style="left:960px;top:60.6px" width="8" height="8" viewBox="0 0 8 8" fill="none" stroke="#dde3ec" stroke-width="0.6"><rect x="0.3" y="0.3" width="2.6" height="2.8"/><rect x="0.3" y="4.7" width="2.6" height="2.8"/><rect x="3.6" y="0.3" width="4" height="2.8" fill="#cfd7e3"/><rect x="3.6" y="4.7" width="4" height="2.8" fill="#cfd7e3"/></svg>
<svg style="left:978.4px;top:60.6px" width="8" height="8" viewBox="0 0 8 8" fill="none" stroke="#27235f"><circle cx="4.9" cy="3.1" r="2.3" stroke-width="1.3"/><path d="M3.2 4.8L0.7 7.3" stroke-width="1.5" stroke-linecap="round"/></svg>
<svg style="left:794.2px;top:86.4px" width="3.6" height="3" viewBox="0 0 3.6 3"><path d="M0 0H3.6L1.8 3Z" fill="#27235f"/></svg>
<div class="hd" style="left:800px;top:84px">KOMÓRKA TABLICY ZADANIA</div>
<svg style="left:795.6px;top:107.6px" width="3.6" height="3" viewBox="0 0 3.6 3"><path d="M0 0H3.6L1.8 3Z" fill="#27235f"/></svg>
<div class="hd" style="left:802.8px;top:105.6px">TEKST</div>
<div class="sq" style="top:106px"></div><svg class="fxs" style="left:984.2px;top:105.2px" width="5.8" height="7.2" viewBox="0 0 5.8 7.2" fill="none" stroke="#67638f" stroke-width="1.1" stroke-linecap="round"><path d="M5.3 0.8C4.2 0.3 3.6 1 3.3 2.2L2.5 5.2C2.2 6.4 1.5 6.8 0.5 6.4"/><path d="M1.7 3.1H4.7" stroke-width="1.1"/></svg>
<div style="left:804.2px;top:122.4px;width:176.4px;height:45.2px;background:#fff;border:1px solid #e6e7ee;border-radius:1.5px"></div>
<div class="val" style="left:809.8px;top:126.8px">Rola</div>
<svg style="left:0;top:0" width="1024" height="439"><rect x="795.25" y="119.15" width="47.6" height="25.4" fill="none" stroke="#e3131b" stroke-width="2.1"/></svg>
<div class="lbl" style="top:178px">Format tekstu</div><div class="info" style="top:177px">i</div>
<div class="inp" style="top:175px"></div><div class="val" style="left:960px;top:175.6px;font-weight:bold;letter-spacing:0.2px;color:#333">...</div><div class="sq" style="top:178.8px"></div>
<svg style="left:796.6px;top:200.6px" width="3" height="3.6" viewBox="0 0 3 3.6"><path d="M0 0V3.6L3 1.8Z" fill="#27235f"/></svg>
<div class="hd" style="left:802.6px;top:198.6px">PODSUMOWANIE</div><div class="sq" style="top:199px"></div>
<div class="lbl" style="top:218.20000000000002px">Powiększalny</div><div class="info" style="top:217.6px">i</div>
<div class="cb" style="top:216.6px"></div><div class="sq" style="top:219.6px"></div>
<svg style="left:874.6px;top:219.6px" width="7" height="5.6" viewBox="0 0 7 5.6" fill="none" stroke="#2b7fc6" stroke-width="1.25"><path d="M0.4 2.8L2.5 4.9L6.6 0.5"/></svg>
<div class="lbl" style="top:238.4px">Pomniejszalny</div><div class="info" style="top:237.79999999999998px">i</div>
<div class="cb" style="top:236.79999999999998px"></div><div class="sq" style="top:239.79999999999998px"></div>
<div class="lbl" style="top:258.8px;font-weight:bold">Zawijaj tekst</div><div class="info" style="top:258.2px">i</div>
<div class="cb" style="top:257.2px"></div><div class="sq" style="top:260.2px"></div>
<svg style="left:874.6px;top:260.2px" width="7" height="5.6" viewBox="0 0 7 5.6" fill="none" stroke="#2b7fc6" stroke-width="1.25"><path d="M0.4 2.8L2.5 4.9L6.6 0.5"/></svg>
<div class="lbl" style="top:279.0px">Zawijanie wierszy</div><div class="info" style="top:278.4px">i</div>
<div class="cb" style="top:277.4px"></div><div class="sq" style="top:280.4px"></div>
<svg style="left:874.6px;top:280.4px" width="7" height="5.6" viewBox="0 0 7 5.6" fill="none" stroke="#2b7fc6" stroke-width="1.25"><path d="M0.4 2.8L2.5 4.9L6.6 0.5"/></svg>
<svg style="left:794.4px;top:302px" width="3" height="3.6" viewBox="0 0 3 3.6"><path d="M0 0V3.6L3 1.8Z" fill="#27235f"/></svg>
<div class="hd" style="left:800.4px;top:300px">STYL</div>
<svg style="left:794.2px;top:323.6px" width="3.6" height="3" viewBox="0 0 3.6 3"><path d="M0 0H3.6L1.8 3Z" fill="#27235f"/></svg>
<div class="hd" style="left:800.2px;top:321.4px">WYGLĄD</div>
<div class="lbl" style="top:342.4px">Kolor tła</div><div class="info" style="top:341.6px">i</div><div class="inp" style="top:339.8px"></div>
<div style="left:879.2px;top:342px;width:9.4px;height:9px;background:#fff;border:1px solid #e4e4ea"></div><div class="val" style="left:894.2px;top:342.4px">rgba(0, 0, 0, 0)</div><svg style="left:960.4px;top:345.2px" width="4.4" height="2.6" viewBox="0 0 4.4 2.6"><path d="M0 0H4.4L2.2 2.6Z" fill="#222"/></svg>
<div class="sqb" style="top:343.4px"></div><svg class="fxs" style="left:984.2px;top:342.4px" width="5.8" height="7.2" viewBox="0 0 5.8 7.2" fill="none" stroke="#67638f" stroke-width="1.1" stroke-linecap="round"><path d="M5.3 0.8C4.2 0.3 3.6 1 3.3 2.2L2.5 5.2C2.2 6.4 1.5 6.8 0.5 6.4"/><path d="M1.7 3.1H4.7" stroke-width="1.1"/></svg>
<div class="lbl" style="top:362.6px">Kolor ramki</div><div class="info" style="top:361.8px">i</div><div class="inp" style="top:359.8px"></div>
<div style="left:880.1px;top:362.5px;width:8px;height:8px;background:#000"></div><div class="val" style="left:894.2px;top:362.6px">rgba(0, 0, 0, 1)</div><svg style="left:960.4px;top:365.4px" width="4.4" height="2.6" viewBox="0 0 4.4 2.6"><path d="M0 0H4.4L2.2 2.6Z" fill="#222"/></svg>
<div class="sqb" style="top:363.6px"></div><svg class="fxs" style="left:984.2px;top:362.6px" width="5.8" height="7.2" viewBox="0 0 5.8 7.2" fill="none" stroke="#67638f" stroke-width="1.1" stroke-linecap="round"><path d="M5.3 0.8C4.2 0.3 3.6 1 3.3 2.2L2.5 5.2C2.2 6.4 1.5 6.8 0.5 6.4"/><path d="M1.7 3.1H4.7" stroke-width="1.1"/></svg>
<div class="lbl" style="top:382.8px">Styl obramowania</div><div class="info" style="top:382px">i</div><div class="inp" style="top:380px"></div>
<div class="val" style="left:877.6px;top:382.6px">Pełny</div><svg style="left:960.4px;top:385.6px" width="4.4" height="2.6" viewBox="0 0 4.4 2.6"><path d="M0 0H4.4L2.2 2.6Z" fill="#222"/></svg>
<div class="sqb" style="top:383.8px"></div><svg class="fxs" style="left:984.2px;top:382.8px" width="5.8" height="7.2" viewBox="0 0 5.8 7.2" fill="none" stroke="#67638f" stroke-width="1.1" stroke-linecap="round"><path d="M5.3 0.8C4.2 0.3 3.6 1 3.3 2.2L2.5 5.2C2.2 6.4 1.5 6.8 0.5 6.4"/><path d="M1.7 3.1H4.7" stroke-width="1.1"/></svg>
<div class="lbl" style="top:403.2px">Szerokość ramki</div><div class="info" style="top:402.4px">i</div><div class="inp" style="top:400.4px"></div>
<div class="val" style="left:877.6px;top:403px">1</div>
<svg style="left:960.6px;top:403px" width="4" height="8.4" viewBox="0 0 4 8.4"><path d="M0 2.2H4L2 0Z M0 6.2H4L2 8.4Z" fill="#222"/></svg>
<div class="sqb" style="top:404.2px"></div><svg class="fxs" style="left:984.2px;top:403.2px" width="5.8" height="7.2" viewBox="0 0 5.8 7.2" fill="none" stroke="#67638f" stroke-width="1.1" stroke-linecap="round"><path d="M5.3 0.8C4.2 0.3 3.6 1 3.3 2.2L2.5 5.2C2.2 6.4 1.5 6.8 0.5 6.4"/><path d="M1.7 3.1H4.7" stroke-width="1.1"/></svg>
<div class="lbl" style="top:423.2px">Krawędzie</div><div class="info" style="top:422.4px">i</div>
<div style="left:871.8px;top:420.2px;width:13.8px;height:13.4px;background:#a9b5c9"></div>
<div style="left:875.4px;top:423.8px;width:6.4px;height:6.2px;border:0.9px dotted #fff"></div>
<div style="left:889.6px;top:424px;width:6.2px;height:6px;border:1px solid #413e78"></div>
<div style="left:913.9px;top:424px;width:6.2px;height:6px;border:1px solid #a3a1c2;border-left:1px solid #5a5788"></div>
<div style="left:927.4px;top:424px;width:6.2px;height:6px;border:1px solid #a3a1c2;border-top:1px solid #5a5788"></div>
<div style="left:941.1px;top:424px;width:6.2px;height:6px;border:1px solid #a3a1c2;border-right:1px solid #5a5788"></div>
<div style="left:954.9px;top:424px;width:6.2px;height:6px;border:1px solid #a3a1c2;border-bottom:1px solid #5a5788"></div>
<div class="sqb" style="top:424.4px"></div><svg class="fxs" style="left:984.2px;top:423.4px" width="5.8" height="7.2" viewBox="0 0 5.8 7.2" fill="none" stroke="#67638f" stroke-width="1.1" stroke-linecap="round"><path d="M5.3 0.8C4.2 0.3 3.6 1 3.3 2.2L2.5 5.2C2.2 6.4 1.5 6.8 0.5 6.4"/><path d="M1.7 3.1H4.7" stroke-width="1.1"/></svg>
</div><div class="abs" style="left:998px;top:34px;width:26px;height:26px;background:#5046f2"></div>
<svg style="left:1005.6px;top:41.6px" width="11" height="11" viewBox="0 0 22 22" fill="none" stroke="#dcdcf4"><circle cx="11" cy="11" r="6.4" stroke-width="2"/><circle cx="11" cy="11" r="2.2" stroke-width="1.6"/><path d="M11 0.8V4.4" stroke-width="3" transform="rotate(0 11 11)"/><path d="M11 0.8V4.4" stroke-width="3" transform="rotate(45 11 11)"/><path d="M11 0.8V4.4" stroke-width="3" transform="rotate(90 11 11)"/><path d="M11 0.8V4.4" stroke-width="3" transform="rotate(135 11 11)"/><path d="M11 0.8V4.4" stroke-width="3" transform="rotate(180 11 11)"/><path d="M11 0.8V4.4" stroke-width="3" transform="rotate(225 11 11)"/><path d="M11 0.8V4.4" stroke-width="3" transform="rotate(270 11 11)"/><path d="M11 0.8V4.4" stroke-width="3" transform="rotate(315 11 11)"/></svg>
<svg style="left:1008px;top:67px" width="8" height="11.4" viewBox="0 0 8 11.4" fill="none" stroke="#e2e2ee" stroke-width="0.95" stroke-linecap="round"><path d="M7.5 1C6.6 0.2 5.5 0.5 5.1 2.2L3.4 9.2C3 10.8 1.8 11.2 0.6 10.4"/><path d="M2.2 4.3H6.6"/></svg>
<svg style="left:1006.6px;top:92.6px" width="9" height="11" viewBox="0 0 9 11"><path d="M0 2.2C0 -0.4 9 -0.4 9 2.2V8.8C9 11.4 0 11.4 0 8.8Z" fill="#e4e4ee"/><ellipse cx="4.5" cy="2.2" rx="3.4" ry="1" fill="#cfcfe0"/></svg>
<svg style="left:1005.2px;top:118.4px" width="11.6" height="11.6" viewBox="0 0 11.6 11.6" fill="none" stroke="#e4e4ee" stroke-width="1.1"><rect x="3.9" y="0.6" width="3.8" height="3.4"/><rect x="0.6" y="7.6" width="3.8" height="3.4"/><rect x="7.2" y="7.6" width="3.8" height="3.4"/><path d="M5.8 4V5.8M2.5 7.6V5.8H9.1V7.6"/></svg>
</div></body></html>
